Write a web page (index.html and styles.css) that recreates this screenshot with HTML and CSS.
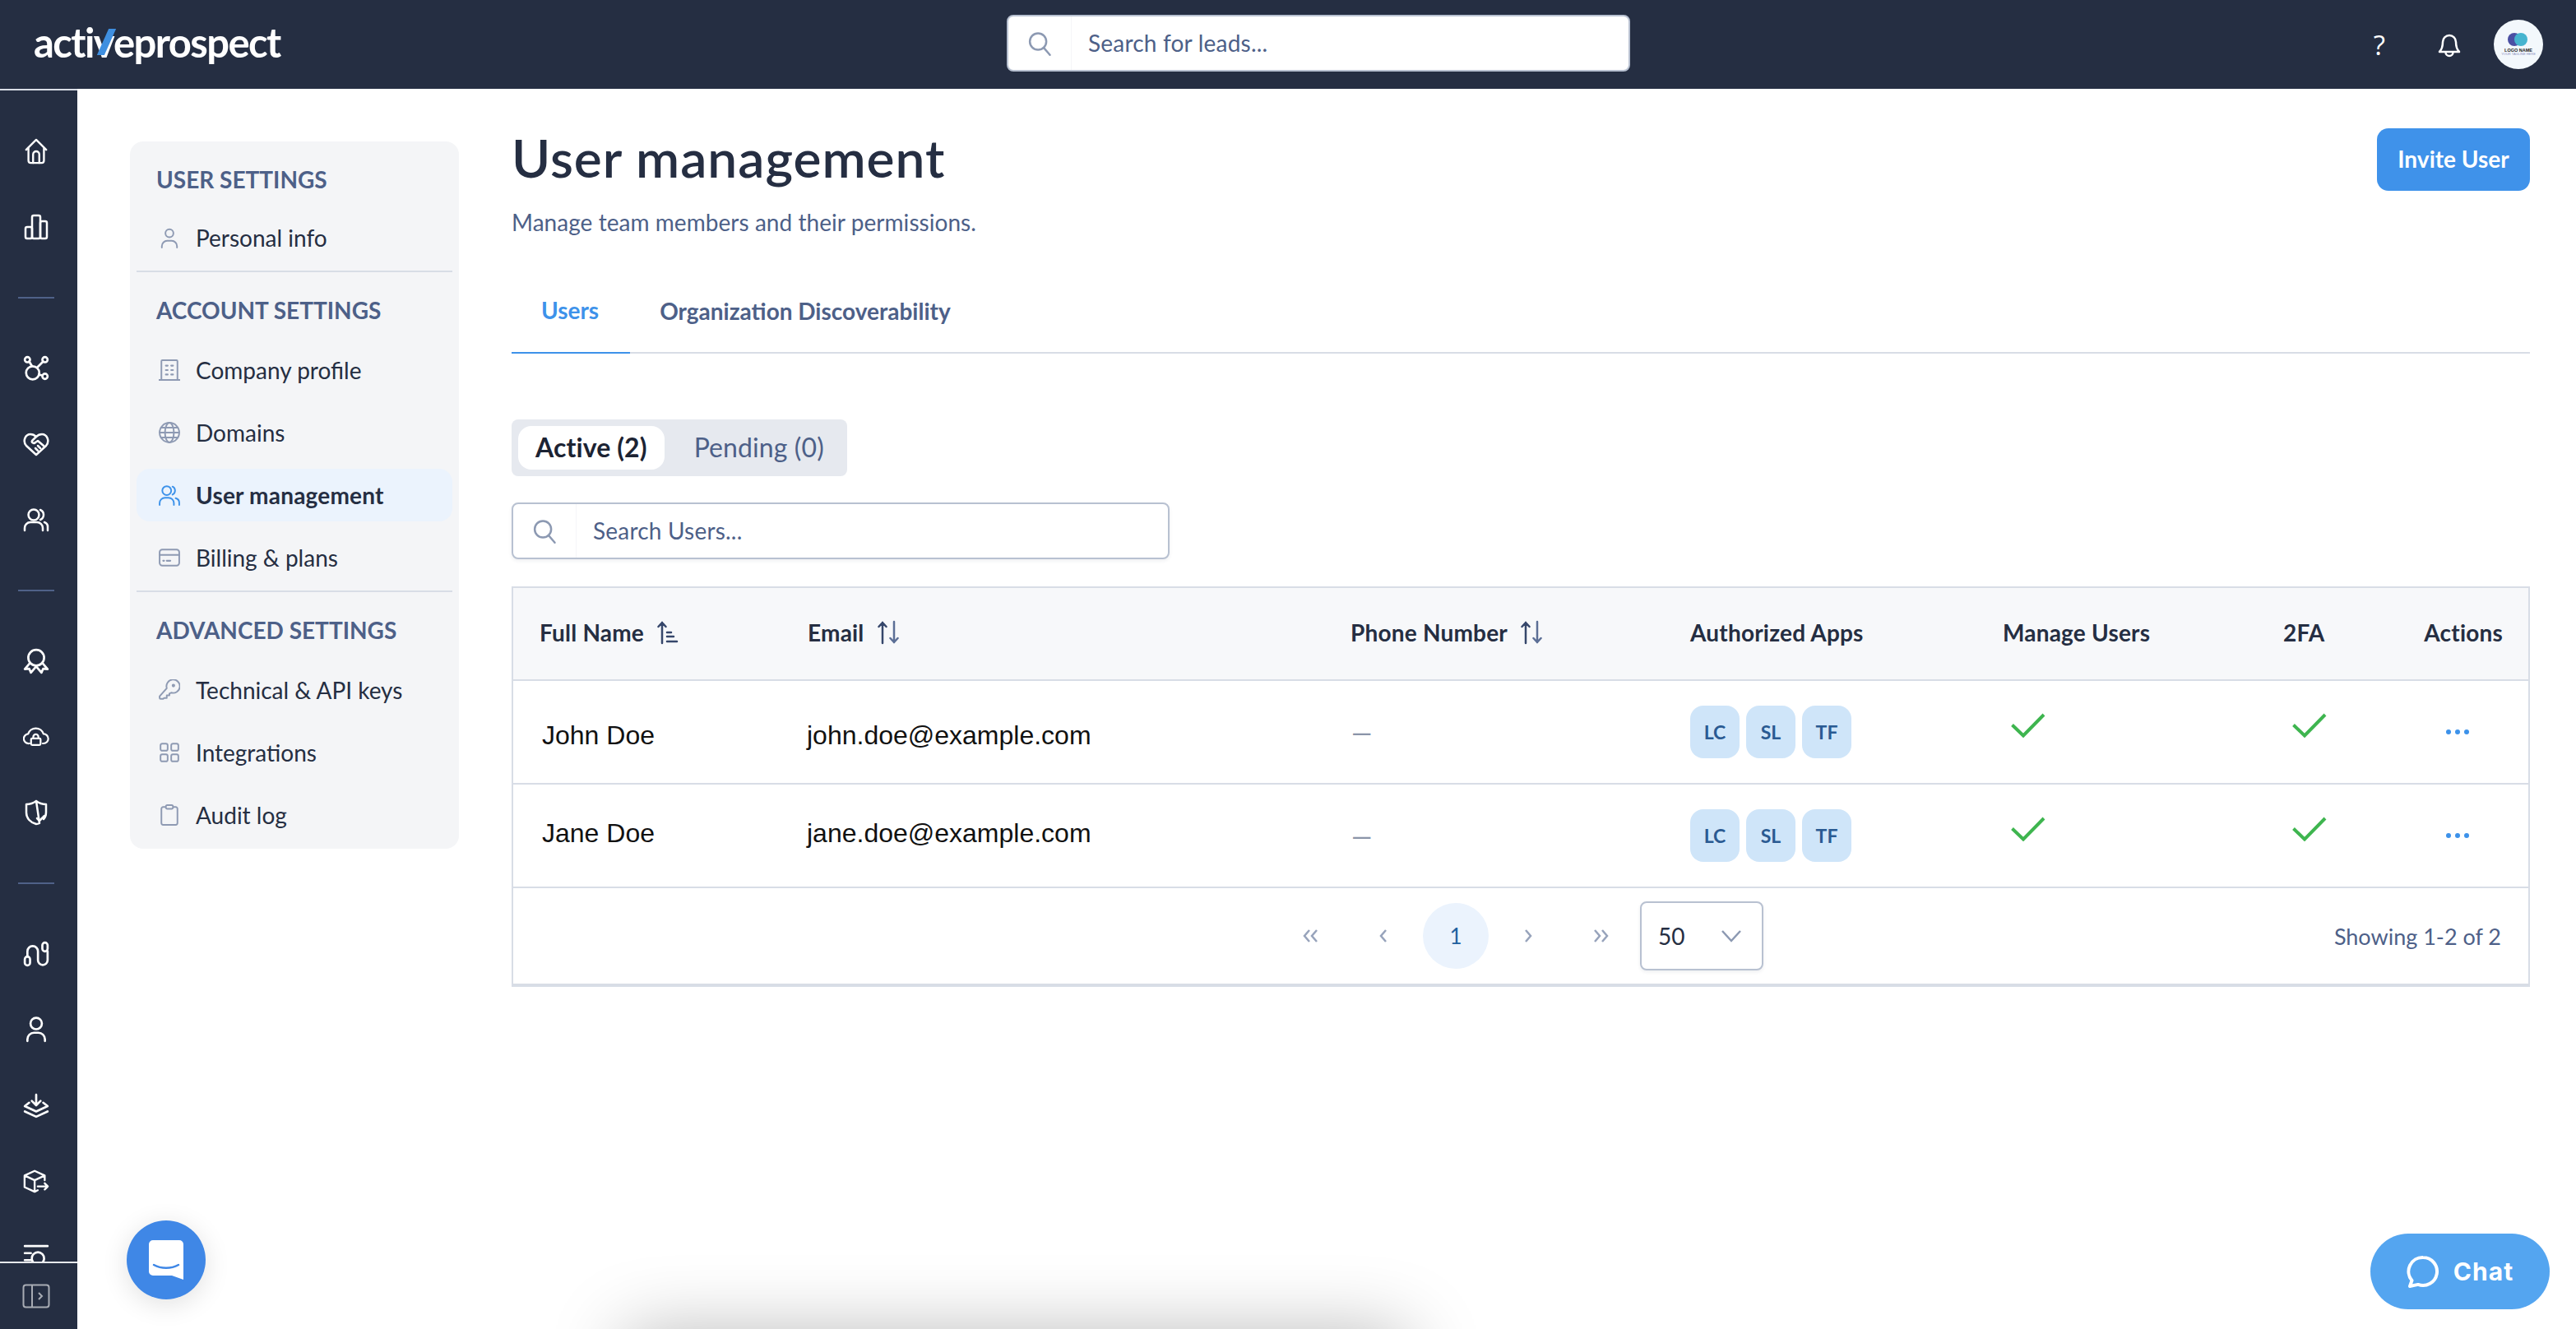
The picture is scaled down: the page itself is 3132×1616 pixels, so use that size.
FILE: index.html
```html
<!DOCTYPE html>
<html lang="en">

<head>
  <meta charset="UTF-8">
  <title>User management</title>
  <link rel="stylesheet" href="styles.css">
</head>

<body>
  <svg class="sprites" width="0" height="0">
    <symbol id="i-search" viewBox="0 0 24 24"><circle cx="10.5" cy="10" r="8"/><path d="M16 16l6 7"/></symbol>
    <symbol id="i-person" viewBox="0 0 24 24"><circle cx="12" cy="7" r="4.5"/><path d="M3.5 23v-1.500a6 6 0 0 1 6-6h5a6 6 0 0 1 6 6V23"/></symbol>
    <symbol id="i-people" viewBox="0 0 24 24"><circle cx="9" cy="7" r="5"/><path d="M15.500 2.500a5 5 0 0 1 0 9M1 23v-2a6 6 0 0 1 6-6h4a6 6 0 0 1 6 6v2M19 15.500a5.500 5.500 0 0 1 4 5.500v2"/></symbol>
    <symbol id="i-sort" viewBox="0 0 30 30"><path class="dk" d="M8 28V3M3.500 8L8 3l4.500 5"/><path class="lt" d="M22 2v25M17.500 22l4.500 5 4.500-5"/></symbol>
    <symbol id="i-check" viewBox="0 0 44 30"><path d="M2.500 14.500L16 27.500 41 2" /></symbol>
    <symbol id="i-dots" viewBox="0 0 28 6"><circle cx="3" cy="3" r="3"/><circle cx="14" cy="3" r="3"/><circle cx="25" cy="3" r="3"/></symbol>
  </svg>

  <header class="topbar">
    <div class="logo">acti<span class="logoV">v<i class="logoSlash"></i></span>eprospect</div>
    <div class="leadSearch">
      <span class="searchAddon"><svg class="searchIcon"><use href="#i-search"/></svg></span>
      <span class="searchText">Search for leads...</span>
    </div>
    <div class="topIcons">
      <span class="helpMark">?</span>
      <svg class="bell" viewBox="0 0 28 32"><path d="M2 25c3-3 4-6 4-12a8 8 0 0 1 16 0c0 6 1 9 4 12z"/><path d="M9.500 25.500a4.500 4.500 0 0 0 9 0"/></svg>
      <div class="avatar">
        <svg class="avatarMark" viewBox="0 0 26 16"><circle cx="8" cy="8" r="8" fill="#4a4fa3"/><circle cx="16" cy="8" r="8" fill="#46b4cf"/></svg>
        <span class="avatarName">LOGO NAME</span>
        <span class="avatarTag">YOUR TAGLINE HERE</span>
      </div>
    </div>
  </header>

  <div class="shell">
    <aside class="rail">
      <nav class="railNav">
        <span class="railItem"><svg viewBox="0 0 30 34"><path d="M2 15L15 2l13 13M5 12v17a3 3 0 0 0 3 3h14a3 3 0 0 0 3-3V12"/><path d="M11 32V21a4 4 0 0 1 8 0v11"/></svg></span>
        <span class="railItem"><svg viewBox="0 0 30 32"><rect x="2" y="16" width="8" height="14" rx="2"/><rect x="10" y="2" width="10" height="28" rx="2"/><rect x="20" y="9" width="8" height="21" rx="2"/></svg></span>
        <span class="railGap"><i></i></span>
        <span class="railItem"><svg viewBox="0 0 30 30"><circle cx="5" cy="5" r="3"/><circle cx="25" cy="5" r="3"/><circle cx="25" cy="24" r="3"/><circle cx="11" cy="20" r="7.500"/><path d="M7 7l3 5M23 7l-7 7M18 22l4 1"/></svg></span>
        <span class="railItem"><svg viewBox="0 0 32 30"><path d="M16 28L4 17C-1 11 3 3 9 3c3 0 5 1 7 3 2-2 4-3 7-3 6 0 10 8 5 14z"/><path d="M16 6l-5 5c-1 2 2 4 4 2l3-2 7 6M15 20l3 3M18 17l3 3"/></svg></span>
        <span class="railItem"><svg viewBox="0 0 32 28"><circle cx="13" cy="8" r="6.500"/><path d="M21 2a6.500 6.500 0 0 1 0 12M2 27v-3a7 7 0 0 1 7-7h8a7 7 0 0 1 7 7v3M26 17a6 6 0 0 1 4 6v4"/></svg></span>
        <span class="railGap"><i></i></span>
        <span class="railItem"><svg viewBox="0 0 30 30"><circle cx="15" cy="11" r="9"/><path d="M8 17l-6 7 5-.500 2 4.500 6-7 6 7 2-4.500 5 .500-6-7"/></svg></span>
        <span class="railItem"><svg viewBox="0 0 36 26"><path d="M9 22H8A6.500 6.500 0 0 1 7 9a11 11 0 0 1 21 0 6.500 6.500 0 0 1 0 13h-1"/><rect x="11" y="15" width="13" height="9" rx="1.500"/><path d="M14 15v-2a3.500 3.500 0 0 1 7 0v2"/></svg></span>
        <span class="railItem"><svg viewBox="0 0 30 32"><path d="M15 2c4 3 8 4 12 4v10c0 3-1 6-3 8M19 29c-1 .500-3 1-4 1C8 28 3 23 3 16V6c4 0 8-1 12-4z"/><path d="M16 23l3 3 6-6"/></svg></span>
        <span class="railGap"><i></i></span>
        <span class="railItem"><svg viewBox="0 0 30 30"><rect x="2" y="18" width="6" height="10" rx="3"/><rect x="22" y="2" width="6" height="10" rx="3"/><path d="M5 18v-6a6 6 0 0 1 12 0v10a5.500 5.500 0 0 0 11 0V12"/></svg></span>
        <span class="railItem"><svg viewBox="0 0 24 30"><circle cx="12" cy="8" r="6.500"/><path d="M2 28v-2a7.500 7.500 0 0 1 7.500-7.500h5A7.500 7.500 0 0 1 22 26v2"/></svg></span>
        <span class="railItem"><svg viewBox="0 0 30 28"><path d="M15 2v11M10 9l5 5 5-5M7 11l-5 4 13 6 13-6-5-4M2 21l13 6 13-6"/></svg></span>
        <span class="railItem"><svg viewBox="0 0 34 30"><path d="M28 14V8L15 2 2 8v15l13 6 4-2M2 8l13 6 13-6M15 14v15M19 22h13M28 18l4 4-4 4"/></svg></span>
        <span class="railItem"><svg viewBox="0 0 30 30"><path d="M2 3h26M2 11h7M2 19h7"/><circle cx="17" cy="17" r="7"/></svg></span>
      </nav>
      <div class="railFoot">
        <svg viewBox="0 0 34 30"><rect x="1.500" y="1.500" width="31" height="27" rx="3"/><path d="M12 2v26M20 11l4 4-4 4"/></svg>
      </div>
    </aside>

    <main class="main">
      <div class="settings">
        <h3 class="setHead">USER SETTINGS</h3>
        <a class="setItem"><svg class="setIcon"><use href="#i-person"/></svg>Personal info</a>
        <hr class="setRule">
        <h3 class="setHead">ACCOUNT SETTINGS</h3>
        <div class="setList">
          <a class="setItem"><svg class="setIcon" viewBox="0 0 24 24"><path d="M0 23h24M3 23V2a1 1 0 0 1 1-1h16a1 1 0 0 1 1 1v21"/><path class="dash" d="M8 7h2M14 7h2M8 12h2M14 12h2M8 17h2M14 17h2"/></svg>Company profile</a>
          <a class="setItem"><svg class="setIcon" viewBox="0 0 24 24"><circle cx="12" cy="12" r="11"/><ellipse cx="12" cy="12" rx="5" ry="11"/><path d="M1 12h22M2.500 6.500h19M2.500 17.500h19"/></svg>Domains</a>
          <a class="setItem isActive"><svg class="setIcon"><use href="#i-people"/></svg>User management</a>
          <a class="setItem"><svg class="setIcon" viewBox="0 0 24 20"><rect x="1" y="1" width="22" height="18" rx="3"/><path d="M1 7h22"/><path class="dash" d="M5 13.500h1M9 13.500h4"/></svg>Billing &amp; plans</a>
        </div>
        <hr class="setRule">
        <h3 class="setHead">ADVANCED SETTINGS</h3>
        <div class="setList">
          <a class="setItem"><svg class="setIcon" viewBox="0 0 24 24"><path d="M9 11a7.500 7.500 0 1 1 5 5l-2 1v2h-3v3H6l-1 1H2a1 1 0 0 1-1-1v-2z" transform="translate(0 -1)"/><circle cx="16.500" cy="7" r="1"/></svg>Technical &amp; API keys</a>
          <a class="setItem"><svg class="setIcon" viewBox="0 0 24 24"><rect x="2" y="2" width="8" height="8" rx="2"/><rect x="14" y="2" width="8" height="8" rx="2"/><rect x="2" y="14" width="8" height="8" rx="2"/><rect x="14" y="14" width="8" height="8" rx="2"/></svg>Integrations</a>
          <a class="setItem"><svg class="setIcon" viewBox="0 0 24 24"><path d="M7 3H5a2 2 0 0 0-2 2v16a2 2 0 0 0 2 2h14a2 2 0 0 0 2-2V5a2 2 0 0 0-2-2h-2"/><rect x="8" y="1" width="8" height="4" rx="1.500"/></svg>Audit log</a>
        </div>
      </div>

      <section class="content">
        <div class="pageHead">
          <div>
            <h1 class="pageTitle">User management</h1>
            <p class="pageSub">Manage team members and their permissions.</p>
          </div>
          <button class="inviteBtn">Invite User</button>
        </div>

        <div class="tabs">
          <a class="tab isCurrent">Users</a>
          <a class="tab">Organization Discoverability</a>
        </div>

        <div class="segment">
          <span class="segBtn isOn">Active (2)</span>
          <span class="segBtn">Pending (0)</span>
        </div>

        <div class="userSearch">
          <span class="searchAddon"><svg class="searchIcon"><use href="#i-search"/></svg></span>
          <span class="searchText">Search Users...</span>
        </div>

        <div class="tableWrap">
          <table class="users">
            <colgroup>
              <col class="cName"><col class="cEmail"><col class="cPhone"><col class="cApps"><col class="cManage"><col class="cTwo"><col class="cAct">
            </colgroup>
            <thead>
              <tr>
                <th><span class="thInner">Full Name<svg class="sortIcon" viewBox="0 0 30 30"><path class="dk" d="M8 28V3M3.500 8L8 3l4.500 5M14 15h5M14 20h8M14 26h12"/></svg></span></th>
                <th><span class="thInner">Email<svg class="sortIcon"><use href="#i-sort"/></svg></span></th>
                <th><span class="thInner">Phone Number<svg class="sortIcon"><use href="#i-sort"/></svg></span></th>
                <th class="thPlain">Authorized Apps</th>
                <th class="thPlain">Manage Users</th>
                <th class="thPlain">2FA</th>
                <th class="thRight">Actions</th>
              </tr>
            </thead>
            <tbody>
              <tr class="rowOne">
                <td class="nameCell">John Doe</td>
                <td class="nameCell emailCell">john.doe@example.com</td>
                <td class="dashCell">&mdash;</td>
                <td><div class="badges"><span class="badge">LC</span><span class="badge">SL</span><span class="badge">TF</span></div></td>
                <td class="checkCell"><svg class="check"><use href="#i-check"/></svg></td>
                <td class="checkCell twoCell"><svg class="check"><use href="#i-check"/></svg></td>
                <td class="dotsCell"><svg class="dots"><use href="#i-dots"/></svg></td>
              </tr>
              <tr class="rowTwo">
                <td class="nameCell">Jane Doe</td>
                <td class="nameCell emailCell">jane.doe@example.com</td>
                <td class="dashCell">&mdash;</td>
                <td><div class="badges"><span class="badge">LC</span><span class="badge">SL</span><span class="badge">TF</span></div></td>
                <td class="checkCell"><svg class="check"><use href="#i-check"/></svg></td>
                <td class="checkCell twoCell"><svg class="check"><use href="#i-check"/></svg></td>
                <td class="dotsCell"><svg class="dots"><use href="#i-dots"/></svg></td>
              </tr>
            </tbody>
          </table>

          <div class="pager">
            <div class="pagerMid">
              <span class="pageBtn"><svg viewBox="0 0 24 20"><path d="M10 3l-6 7 6 7M19 3l-6 7 6 7"/></svg></span>
              <span class="pageBtn"><svg viewBox="0 0 24 20"><path d="M15 3l-6 7 6 7"/></svg></span>
              <span class="pageBtn isHere">1</span>
              <span class="pageBtn"><svg viewBox="0 0 24 20"><path d="M9 3l6 7-6 7"/></svg></span>
              <span class="pageBtn"><svg viewBox="0 0 24 20"><path d="M5 3l6 7-6 7M14 3l6 7-6 7"/></svg></span>
              <div class="pageSize">50<svg viewBox="0 0 26 16"><path d="M2 2l11 12L24 2"/></svg></div>
            </div>
            <span class="showing">Showing 1-2 of 2</span>
          </div>
        </div>
      </section>
    </main>
  </div>

  <!-- floating bits -->
  <div class="helpBlob">
    <svg viewBox="0 0 42 48"><path d="M5 0h32a5 5 0 0 1 5 5v43l-14-5H5a5 5 0 0 1-5-5V5a5 5 0 0 1 5-5z" fill="#fff"/><path d="M6 30c9 5 21 5 30 0" fill="none" stroke="#3f87e6" stroke-width="2.500" stroke-linecap="round"/></svg>
  </div>
  <div class="chatBtn">
    <svg viewBox="0 0 40 40"><path d="M20 3a17 17 0 1 1-6 32.900L4 38l2.500-7A17 17 0 0 1 20 3z"/></svg>
    <span>Chat</span>
  </div>
  <div class="popShadow"></div>
</body>

</html>
```

FILE: styles.css
```css
* {
  box-sizing: border-box;
}

html,
body {
  height: 100%;
}

body {
  margin: 0;
  overflow: hidden;
  background-color: white;
  color: #252e42;
  font-family: Lato, "Open Sans", sans-serif;
  font-size: 28px;
}

.sprites {
  position: absolute;
}

/* top bar */
.topbar {
  display: grid;
  grid-template-columns: 1224px 758px 1fr;
  align-items: center;
  height: 108px;
  background-color: #252e42;
}

.logo {
  padding-left: 41px;
  padding-bottom: 6px;
  color: white;
  font-family: Lato, sans-serif;
  font-size: 49px;
  font-weight: 700;
  letter-spacing: -1.600px;
}

.logoV {
  position: relative;
}

.logoSlash {
  position: absolute;
  top: 13px;
  left: 11px;
  width: 9px;
  height: 32px;
  background-color: #3f8fe0;
  transform: skewX(-24deg);
}

.leadSearch,
.userSearch {
  display: flex;
  align-items: center;
  background-color: white;
  border: 2px solid #b8c1d1;
  border-radius: 8px;
  color: #4d6088;
  font-size: 28px;
  letter-spacing: 0.200px;
}

.leadSearch {
  height: 69px;
  margin-bottom: 3px;
}

.searchAddon {
  display: flex;
  align-items: center;
  justify-content: center;
  align-self: stretch;
  width: 77px;
  border-right: 1px solid #f5f6f8;
}

.searchIcon {
  width: 30px;
  height: 32px;
  fill: none;
  stroke: #8c99b2;
  stroke-width: 2;
  stroke-linecap: round;
}

.searchText {
  padding-left: 20px;
  padding-bottom: 2px;
}

.topIcons {
  display: flex;
  align-items: center;
  justify-content: flex-end;
  padding-right: 40px;
  color: white;
}

.helpMark {
  margin-right: 64px;
  font-family: "Open Sans", sans-serif;
  font-size: 33px;
}

.bell {
  width: 28px;
  height: 32px;
  margin-right: 40px;
  fill: none;
  stroke: white;
  stroke-width: 2.500;
  stroke-linejoin: round;
}

.avatar {
  display: flex;
  flex-direction: column;
  align-items: center;
  justify-content: center;
  width: 60px;
  height: 60px;
  background-color: #f3f8fc;
  border-radius: 50%;
  color: #222;
}

.avatarMark {
  width: 26px;
  height: 16px;
  margin-bottom: 2px;
}

.avatarName {
  font-family: "Liberation Sans", sans-serif;
  font-size: 5.500px;
  font-weight: 700;
  line-height: 6px;
}

.avatarTag {
  color: #8a8fc0;
  font-family: "Liberation Sans", sans-serif;
  font-size: 4px;
  line-height: 4px;
}

/* layout under the bar */
.shell {
  display: flex;
  height: calc(100% - 108px);
}

/* left rail */
.rail {
  display: flex;
  flex-direction: column;
  flex: 0 0 94px;
  background-color: #252e42;
  border-top: 2px solid #d8dde6;
}

.railNav {
  flex: 1;
  display: flex;
  flex-direction: column;
  min-height: 0;
  overflow: hidden;
  padding: 28px 6px 0 0;
}

.railItem {
  flex: 0 0 92px;
  display: flex;
  align-items: center;
  justify-content: center;
}

.railItem svg {
  width: 32px;
  height: 32px;
  fill: none;
  stroke: white;
  stroke-width: 2.500;
  stroke-linecap: round;
  stroke-linejoin: round;
}

.railGap {
  flex: 0 0 80px;
  display: flex;
  align-items: center;
  justify-content: center;
}

.railGap i {
  width: 44px;
  height: 2px;
  background-color: #4f6188;
}

.railFoot {
  flex: 0 0 82px;
  display: flex;
  align-items: center;
  justify-content: center;
  padding-right: 6px;
  border-top: 2px solid #e6e8ec;
}

.railFoot svg {
  width: 34px;
  height: 34px;
  fill: none;
  stroke: #a7abb3;
  stroke-width: 2;
}

/* main area */
.main {
  flex: 1;
  display: flex;
  align-items: flex-start;
  gap: 64px;
  padding: 48px 56px 0 64px;
}

/* settings menu */
.settings {
  flex: 0 0 400px;
  margin-top: 16px;
  padding: 26px 8px 9px;
  background-color: #f4f5f7;
  border-radius: 16px;
}

.setHead {
  margin: 0 0 21px;
  padding-left: 24px;
  color: #4d6088;
  font-size: 28px;
  font-weight: 700;
  line-height: 40px;
}

.setHead:first-child {
  margin-bottom: 19px;
}

.setItem {
  display: flex;
  align-items: center;
  gap: 19px;
  height: 64px;
  padding-left: 27px;
  border-radius: 16px;
}

.setIcon {
  flex: none;
  width: 26px;
  height: 26px;
  fill: none;
  stroke: #8e9ab3;
  stroke-width: 1.800;
  stroke-linecap: round;
  stroke-linejoin: round;
}

.setIcon .dash {
  stroke-width: 2;
}

.setItem.isActive {
  background-color: #ebf3fd;
  font-weight: 700;
  letter-spacing: 0.200px;
}

.setItem.isActive .setIcon {
  stroke: #3d92ea;
}

.setList {
  display: flex;
  flex-direction: column;
  gap: 12px;
}

.setRule {
  height: 2px;
  margin: 8px 0 26px;
  background-color: #d8dde6;
  border: 0;
}

/* page content */
.content {
  flex: 1;
  min-width: 0;
}

.pageHead {
  display: flex;
  justify-content: space-between;
  align-items: flex-start;
}

.pageTitle {
  margin: -2px 0 0;
  font-size: 64px;
  font-weight: 600;
  letter-spacing: 1px;
  line-height: 76px;
}

.pageSub {
  margin: 22px 0 0;
  color: #4d6088;
  letter-spacing: 0.050px;
  line-height: 36px;
}

.inviteBtn {
  width: 186px;
  height: 76px;
  padding-bottom: 4px;
  background-color: #3f92ea;
  border: none;
  border-radius: 14px;
  color: white;
  font-family: inherit;
  font-size: 28px;
  font-weight: 700;
}

.tabs {
  display: flex;
  height: 104px;
  margin-top: 38px;
  border-bottom: 2px solid #d8dde6;
}

.tab {
  display: flex;
  align-items: center;
  height: 104px;
  padding: 0 38px 0 36px;
  font-weight: 700;
  color: #4d6088;
}

.tab.isCurrent {
  color: #3d92ea;
  border-bottom: 2px solid #3d92ea;
}

.segment {
  display: inline-flex;
  align-items: center;
  gap: 36px;
  height: 69px;
  margin-top: 80px;
  padding: 0 28px 0 8px;
  background-color: #e6e9ef;
  border-radius: 8px;
  color: #4d6088;
  font-size: 32px;
}

.segBtn {
  padding-bottom: 2px;
  letter-spacing: 0.100px;
}

.segBtn.isOn {
  display: flex;
  align-items: center;
  height: 53px;
  padding: 0 21px 2px;
  background-color: white;
  border-radius: 16px;
  color: #1c2333;
  font-weight: 700;
}

.userSearch {
  width: 800px;
  height: 69px;
  margin-top: 32px;
  box-shadow: 0 2px 4px rgba(40, 50, 80, 0.08);
}

/* table */
.tableWrap {
  margin-top: 33px;
  border: 2px solid #d8dde6;
  border-bottom-width: 4px;
}

.users {
  width: 100%;
  table-layout: fixed;
  border-collapse: separate;
  border-spacing: 0;
}

.cName { width: 326px; }
.cEmail { width: 660px; }
.cPhone { width: 412px; }
.cApps { width: 380px; }
.cManage { width: 341px; }
.cTwo { width: 172px; }
.cAct { width: 159px; }

.users th {
  height: 113px;
  padding: 0 0 3px 32px;
  background-color: #f7f8fa;
  border-bottom: 2px solid #d8dde6;
  font-size: 28px;
  font-weight: 700;
  letter-spacing: 0.200px;
  text-align: left;
}

.users th.thPlain {
  padding-left: 33px;
}

.users th.thRight {
  padding: 0 31px 3px 0;
  text-align: right;
}

.thInner {
  display: flex;
  align-items: center;
  gap: 14px;
}

.sortIcon {
  width: 30px;
  height: 30px;
  fill: none;
  stroke-linecap: round;
  stroke-width: 2.500;
}

.sortIcon .dk,
.dk {
  stroke: #36476b;
}

.lt {
  stroke: #5c6f96;
}

.users td {
  height: 126px;
  padding: 0 0 0 33px;
  border-bottom: 2px solid #d8dde6;
}

.nameCell {
  color: #111;
  font-family: "Liberation Sans", sans-serif;
  font-size: 32px;
}

.users .nameCell {
  padding-left: 35px;
}

.users .emailCell {
  padding-left: 31px;
}

.rowOne .nameCell {
  padding-top: 8px;
}

.rowTwo .nameCell {
  padding-bottom: 6px;
}

.dashCell {
  color: #8a94a8;
  font-size: 32px;
}

.badges {
  display: flex;
  gap: 8px;
}

.badge {
  display: flex;
  align-items: center;
  justify-content: center;
  width: 60px;
  height: 64px;
  background-color: #cfe5f9;
  border-radius: 16px;
  color: #2a5a92;
  font-size: 23px;
  font-weight: 700;
}

.users .checkCell {
  padding: 0 0 16px 42px;
}

.users .twoCell {
  padding-left: 43px;
}

.check {
  display: block;
  width: 44px;
  height: 30px;
  fill: none;
  stroke: #3eb54f;
  stroke-width: 4;
}

.users .dotsCell {
  padding-left: 59px;
}

.dots {
  display: block;
  width: 28px;
  height: 6px;
  fill: #3d92ea;
}

/* pagination */
.pager {
  position: relative;
  display: flex;
  align-items: center;
  justify-content: center;
  height: 116px;
}

.pagerMid {
  display: flex;
  align-items: center;
  gap: 8px;
}

.pageBtn {
  display: flex;
  align-items: center;
  justify-content: center;
  width: 80px;
  height: 80px;
  border-radius: 50%;
  font-size: 26px;
}

.pageBtn svg {
  width: 24px;
  height: 20px;
  fill: none;
  stroke: #97a3bb;
  stroke-width: 2.500;
}

.pageBtn.isHere {
  background-color: #ebf3fd;
  color: #20609f;
}

.pageSize {
  display: flex;
  align-items: center;
  justify-content: space-between;
  width: 150px;
  height: 84px;
  padding: 0 24px 0 20px;
  background-color: white;
  border: 2px solid #b8c1d1;
  border-radius: 8px;
  box-shadow: 0 2px 4px rgba(40, 50, 80, 0.08);
}

.pageSize svg {
  width: 26px;
  height: 16px;
  fill: none;
  stroke: #8c99b2;
  stroke-width: 2.500;
}

.showing {
  position: absolute;
  right: 33px;
  color: #4d6088;
  font-size: 27px;
}

/* floating widgets */
.helpBlob {
  position: fixed;
  left: 154px;
  top: 1484px;
  display: flex;
  align-items: center;
  justify-content: center;
  width: 96px;
  height: 96px;
  background-color: #3f87e6;
  border-radius: 50%;
  box-shadow: 0 6px 32px rgba(0, 0, 0, 0.12);
}

.helpBlob svg {
  width: 42px;
  height: 48px;
}

.chatBtn {
  position: fixed;
  left: 2882px;
  top: 1500px;
  display: flex;
  align-items: center;
  justify-content: center;
  gap: 17px;
  width: 218px;
  height: 92px;
  background-color: #54a5f0;
  border-radius: 46px;
  color: white;
  font-family: Inter, sans-serif;
  font-size: 30px;
  font-weight: 700;
  letter-spacing: 1px;
}

.chatBtn svg {
  width: 40px;
  height: 40px;
  fill: none;
  stroke: white;
  stroke-width: 4;
  stroke-linejoin: round;
}

.popShadow {
  position: fixed;
  left: 780px;
  top: 1640px;
  width: 910px;
  height: 100px;
  box-shadow: 0 0 90px 20px rgba(0, 0, 0, 0.28);
}
```
